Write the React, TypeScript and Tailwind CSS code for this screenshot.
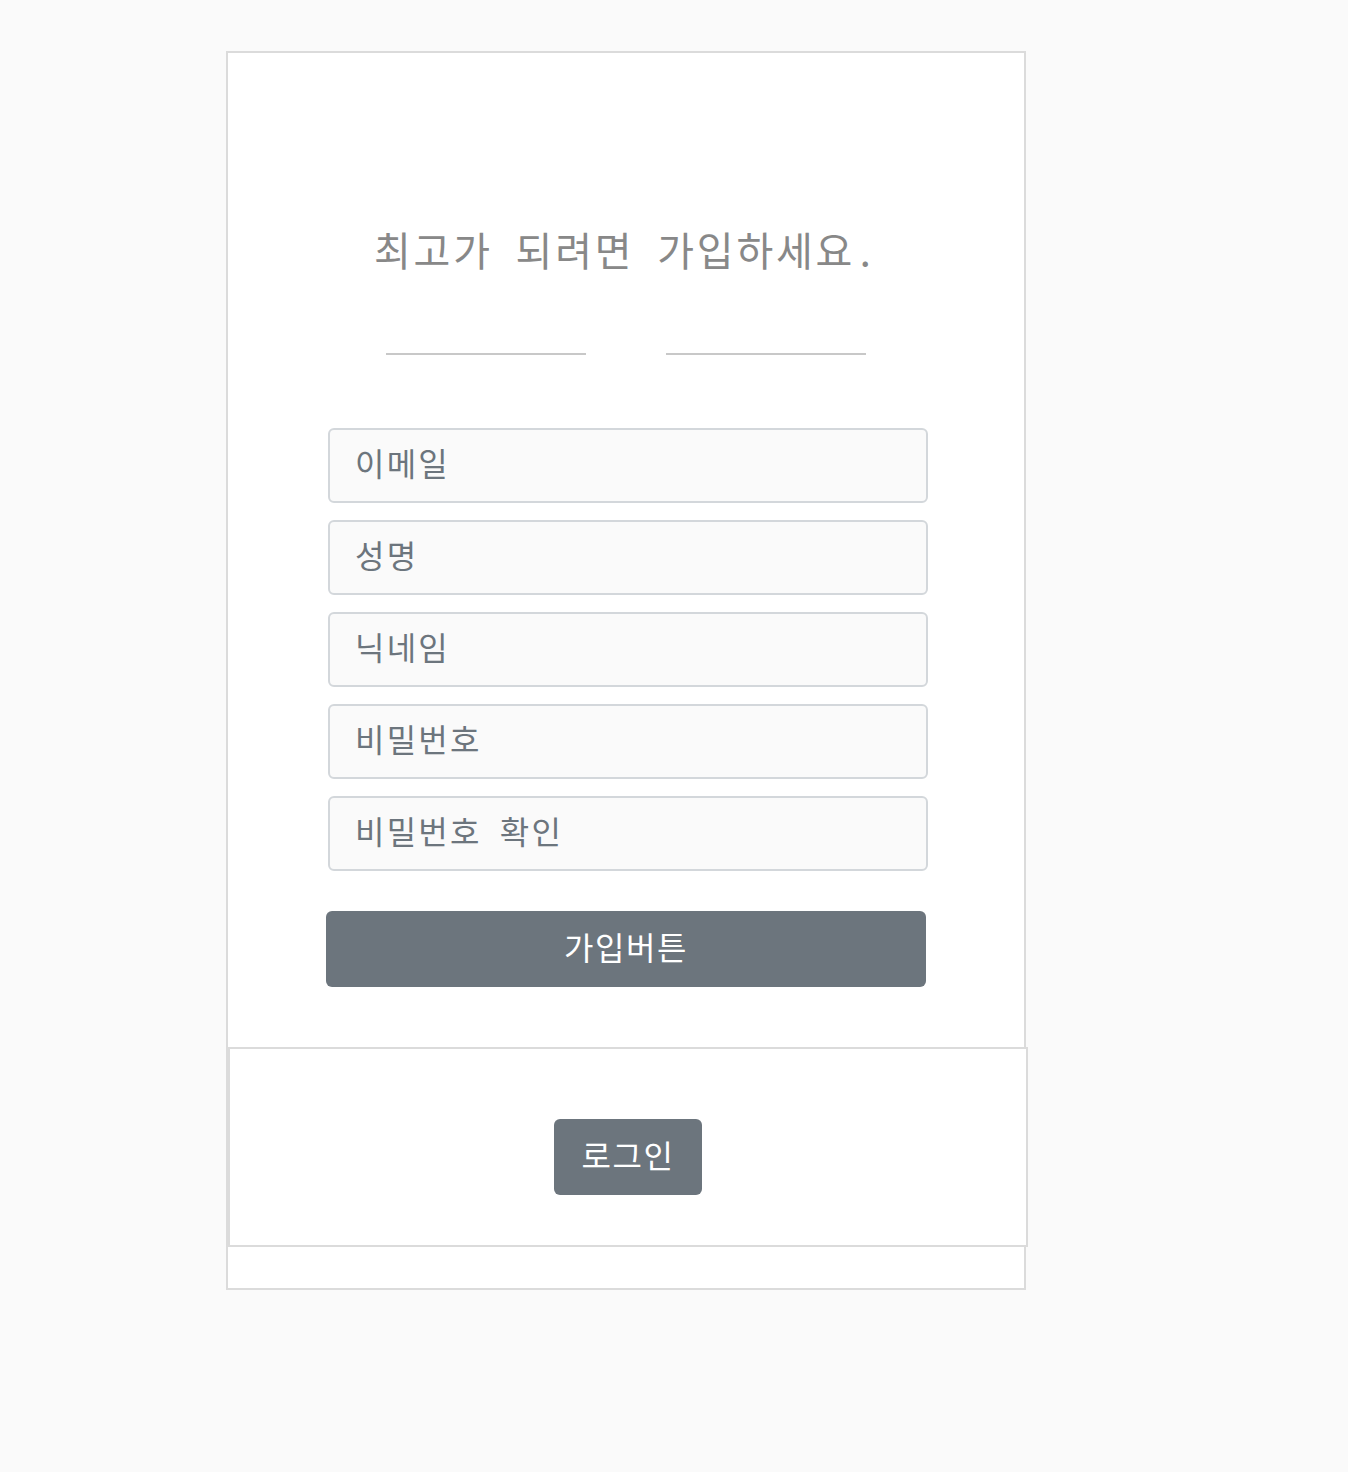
import React from "react";

const font = { fontFamily: '"Noto Sans Mono CJK KR", "Noto Sans CJK KR", "Noto Sans", monospace' };

export default function App() {
  const fields = ["이메일", "성명", "닉네임", "비밀번호", "비밀번호 확인"];
  return (
    <div className="min-h-screen bg-[#fafafa] pl-[226px] pt-[51px]" style={font}>
      <div className="w-[800px] border-2 border-[#dbdbdb] bg-white pt-[166px] pb-[41px]">
        <h1 className="text-center text-[40px] leading-[60px] font-normal tracking-[2.8px] text-[#888888]">
          최고가 되려면 가입하세요.
        </h1>
        <div className="mt-[74px] flex justify-center gap-[80px]">
          <div className="h-[2px] w-[200px] bg-[#c8c8c8]" />
          <div className="h-[2px] w-[200px] bg-[#c8c8c8]" />
        </div>
        <form className="mt-[73px] flex flex-col">
          <div className="ml-[100px] flex flex-col gap-[17px]">
            {fields.map((f) => (
              <input
                key={f}
                placeholder={f}
                className="box-border h-[75px] w-[600px] rounded-[6px] border-2 border-[#d3d7db] bg-[#fafafa] pl-[25px] pb-[8px] text-[32px] tracking-[2.2px] text-[#495057] outline-none placeholder:text-[#6c757d]"
                style={font}
              />
            ))}
          </div>
          <button
            type="button"
            className="ml-[98px] mt-[40px] h-[76px] w-[600px] rounded-[6px] bg-[#6c757d] pb-[6px] text-[32px] tracking-[1.5px] text-white"
            style={font}
          >
            가입버튼
          </button>
        </form>
        <div className="mt-[60px] box-border flex h-[200px] w-[800px] justify-center border-2 border-[#dbdbdb] bg-white pt-[70px]">
          <button
            type="button"
            className="h-[76px] w-[148px] rounded-[6px] bg-[#6c757d] pb-[6px] text-[32px] tracking-[1.5px] text-white"
            style={font}
          >
            로그인
          </button>
        </div>
      </div>
    </div>
  );
}
